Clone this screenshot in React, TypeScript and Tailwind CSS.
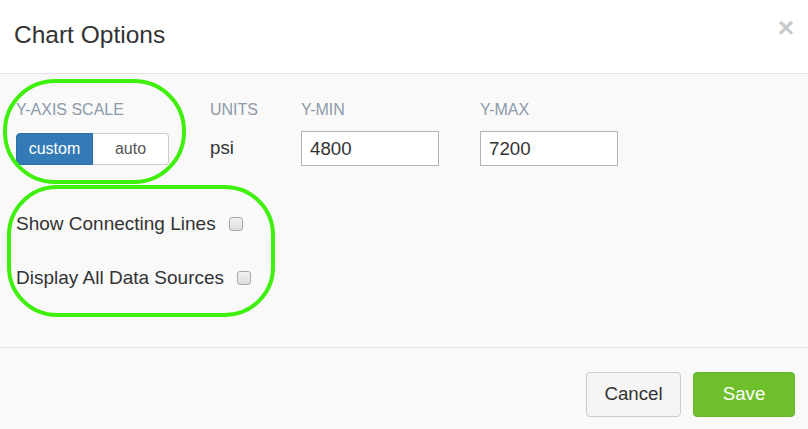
import React from 'react';

const font = { fontFamily: '"Liberation Sans", Arial, sans-serif' };

const Field: React.FC<{ label: string; width: string; children: React.ReactNode }> = ({
  label,
  width,
  children,
}) => (
  <div className={`flex flex-col ${width}`}>
    <div className="text-[16px] leading-[20px] text-[#8d9aa8] mb-[11px]">{label}</div>
    <div className="h-[35px] flex items-center">{children}</div>
  </div>
);

const Check: React.FC<{ label: string }> = ({ label }) => (
  <label className="flex items-center text-[19px] leading-[26px] text-[#333]">
    <span>{label}</span>
    <span className="ml-[13px] w-[14px] h-[14px] rounded-[3px] border border-[#a9a9a9] bg-gradient-to-b from-[#f2f2f2] to-[#dcdcdc]"></span>
  </label>
);

const App: React.FC = () => {
  return (
    <div className="relative w-[808px] h-[429px] bg-[#f9f9f9] overflow-hidden" style={font}>
      {/* header */}
      <div className="h-[74px] bg-white border-b border-[#e3e3e3] flex items-center justify-between pl-[14px] pr-[14px]">
        <h4 className="text-[24.5px] leading-[30px] text-[#333] -mt-[3px]">Chart Options</h4>
        <span className="text-[28px] font-bold leading-none text-[#c9c9c9] -mt-[17px]">×</span>
      </div>

      {/* body */}
      <div className="h-[273px] pl-[16px] pt-[26px]">
        <div className="flex">
          <Field label="Y-AXIS SCALE" width="w-[194px]">
            <div className="flex h-[32px] text-[16px]">
              <button className="w-[77px] bg-[#337ab7] border border-[#2e6da4] text-white rounded-l-[4px]">
                custom
              </button>
              <button className="w-[76px] bg-white border border-l-0 border-[#ccc] text-[#555] rounded-r-[4px]">
                auto
              </button>
            </div>
          </Field>
          <Field label="UNITS" width="w-[91px]">
            <span className="text-[18.7px] text-[#333]">psi</span>
          </Field>
          <Field label="Y-MIN" width="w-[179px]">
            <input
              readOnly
              value="4800"
              className="w-[138px] h-[35px] border border-[#b5b5b5] bg-white px-[8px] text-[18.7px] text-[#333] outline-none"
            />
          </Field>
          <Field label="Y-MAX" width="w-[160px]">
            <input
              readOnly
              value="7200"
              className="w-[138px] h-[35px] border border-[#b5b5b5] bg-white px-[8px] text-[18.7px] text-[#333] outline-none"
            />
          </Field>
        </div>

        <div className="flex flex-col gap-[28px] mt-[45px]">
          <Check label="Show Connecting Lines" />
          <Check label="Display All Data Sources" />
        </div>
      </div>

      {/* footer */}
      <div className="h-[82px] border-t border-[#e3e3e3] flex items-center justify-end gap-[12px] pr-[13px] pt-[11px]">
        <button className="w-[95px] h-[45px] rounded-[4px] border border-[#cccccc] bg-[#f5f5f5] text-[18.7px] text-[#333]">
          Cancel
        </button>
        <button className="w-[102px] h-[45px] rounded-[4px] border border-[#66b42a] bg-[#6fbf2c] text-[18.7px] text-white">
          Save
        </button>
      </div>

      {/* annotations */}
      <div className="absolute left-[3px] top-[79px] w-[183px] h-[105px] rounded-[52px] border-[4px] border-[#3ef00c]"></div>
      <div className="absolute left-[7px] top-[185px] w-[268px] h-[132px] rounded-[50px] border-[4px] border-[#3ef00c]"></div>
    </div>
  );
};

export default App;
